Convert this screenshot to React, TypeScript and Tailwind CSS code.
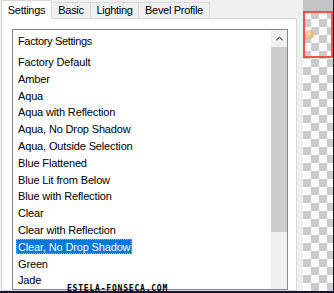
import { ChevronUp } from 'lucide-react';

const presets = [
  'Factory Default',
  'Amber',
  'Aqua',
  'Aqua with Reflection',
  'Aqua, No Drop Shadow',
  'Aqua, Outside Selection',
  'Blue Flattened',
  'Blue Lit from Below',
  'Blue with Reflection',
  'Clear',
  'Clear with Reflection',
  'Clear, No Drop Shadow',
  'Green',
  'Jade',
];

const tabs = [
  { label: 'Basic', w: 'w-[39px]' },
  { label: 'Lighting', w: 'w-[48px]' },
  { label: 'Bevel Profile', w: 'w-[71px]' },
];

function PresetList() {
  return (
    <div className="flex h-full border border-[#828790] bg-white">
      <div className="flex-1 flex flex-col pt-[3px] pl-[3px]">
        <div className="h-[17px] flex items-center px-[2px] mb-[4px] tracking-[-0.35px]">Factory Settings</div>
        {presets.map(name => (
          <div key={name} className="h-[17px] flex items-center">
            {name === 'Clear, No Drop Shadow' ? (
              <span className="h-[15px] flex items-center px-[2px] bg-[#0078d7] text-white outline outline-1 outline-dotted outline-[#e9a54a] -outline-offset-1">
                {name}
              </span>
            ) : (
              <span className="px-[2px]">{name}</span>
            )}
          </div>
        ))}
      </div>
      <div className="w-[16px] flex flex-col bg-[#f0f0f0]">
        <div className="h-[17px] flex items-center justify-center">
          <ChevronUp size={11} strokeWidth={3} className="text-[#606060]" />
        </div>
        <div className="h-[185px] bg-[#cdcdcd]" />
        <div className="flex-1" />
      </div>
    </div>
  );
}

export default function App() {
  return (
    <div
      className="w-[334px] h-[293px] overflow-hidden flex bg-[#f0f0f0] border-r border-b-2 border-[#1e1430] text-[11px] tracking-[-0.15px] text-black"
      style={{ fontFamily: '"Liberation Sans", Arial, sans-serif' }}
    >
      <div className="w-[303px] flex flex-col pl-[1px]">
        <div className="h-[19px] flex items-start relative z-10 tracking-[-0.3px]">
          <div className="w-[51px] h-[19px] bg-white border border-b-0 border-[#d9d9d9] flex justify-center pt-[1px]">
            Settings
          </div>
          {tabs.map(t => (
            <div
              key={t.label}
              className={`${t.w} h-[17px] mt-[2px] bg-[#f0f0f0] border border-l-0 border-[#d9d9d9] flex justify-center items-center`}
            >
              {t.label}
            </div>
          ))}
        </div>
        <div className="-mt-[1px] w-[296px] flex-1 bg-white border border-[#d9d9d9] pl-[10px] pt-[10px] pr-[8px] min-h-0">
          <PresetList />
        </div>
      </div>
      <div className="flex-1 flex flex-col">
        <div className="h-[11px] bg-[#c4c4c4]" />
        <div className="flex-1 relative bg-[conic-gradient(#cccccc_25%,#ffffff_0_50%,#cccccc_0_75%,#ffffff_0)] bg-[length:16px_16px]">
          <div className="absolute left-0 right-0 top-0 h-[47px] border-2 border-[#ff4d4d]" />
          <div className="absolute left-[2px] top-[19px] w-[9px] h-[9px] rounded-full bg-[radial-gradient(circle_at_40%_40%,#ffd9a8,#e8a060)]" />
        </div>
      </div>
      <div
        className="absolute left-[67px] top-[283px] text-[8px] tracking-[0.8px] font-bold"
        style={{ fontFamily: '"DejaVu Sans Mono", monospace' }}
      >
        ESTELA-FONSECA.COM
      </div>
    </div>
  );
}
